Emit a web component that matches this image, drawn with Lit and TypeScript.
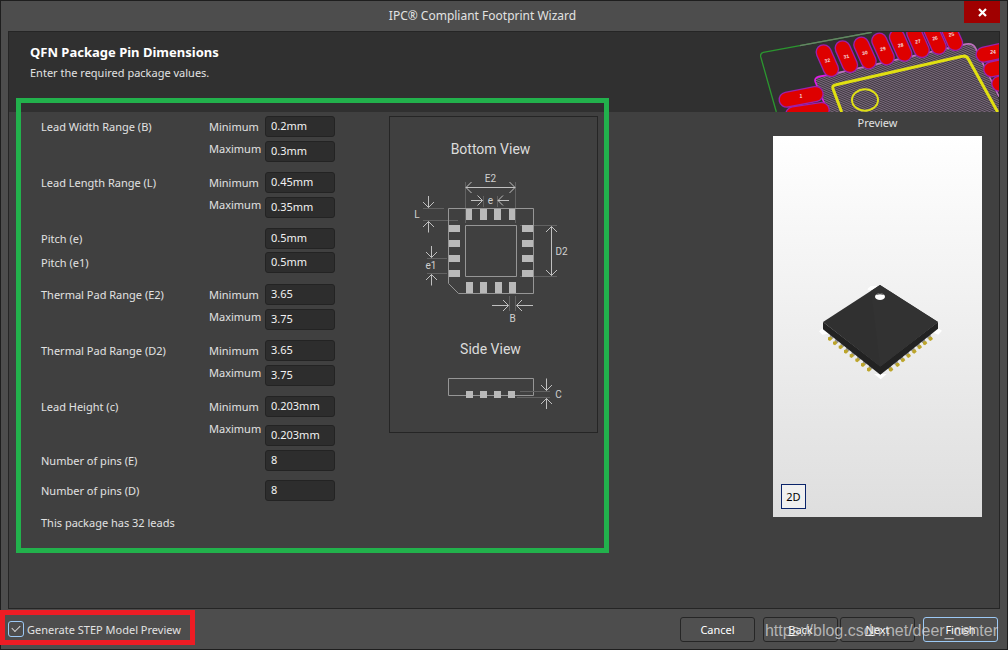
import { LitElement, html, svg, css } from "lit";
import { customElement } from "lit/decorators.js";

const base = css`
  :host { display: block; }
  *, *::before, *::after { box-sizing: border-box; }
  svg { display: block; }
`;

const rangeGroups = [
  { label: "Lead Width Range (B)", min: "0.2mm", max: "0.3mm" },
  { label: "Lead Length Range (L)", min: "0.45mm", max: "0.35mm" },
  { pair: [["Pitch (e)", "0.5mm"], ["Pitch (e1)", "0.5mm"]] },
  { label: "Thermal Pad Range (E2)", min: "3.65", max: "3.75" },
  { label: "Thermal Pad Range (D2)", min: "3.65", max: "3.75" },
  { label: "Lead Height (c)", min: "0.203mm", max: "0.203mm", spaced: true },
];

@customElement("dimension-fields")
class DimensionFields extends LitElement {
  static styles = [base, css`
    .groups { display: flex; flex-direction: column; gap: 10px; }
    .group { display: grid; grid-template-columns: 168px 56px 70px; line-height: 22px; }
    .names { display: flex; flex-direction: column; }
    .inputs { display: flex; flex-direction: column; gap: 4px; }
    .inputs.spaced { gap: 8px; }
    .pair { display: flex; flex-direction: column; gap: 3px; padding-bottom: 1px; }
    .row { display: grid; grid-template-columns: 224px 70px; height: 21px; line-height: 22px; }
    .counts { display: flex; flex-direction: column; gap: 9px; padding-top: 4px; }
    .note { margin: 11px 0 0; line-height: 22px; }
    input {
      width: 100%; height: 21px; padding: 0 5px 2px; color: #f2f2f2; background: #2d2d2d;
      border: 1px solid #232323; border-radius: 3px; font: inherit; line-height: 17px; outline: 0;
    }
  `];
  render() {
    return html`
      <div class="groups">
        ${rangeGroups.map((g: any, i) => g.pair
          ? html`<div class="pair">${g.pair.map(([name, value]: string[], j: number) => html`
              <div class="row"><label for="p${j}">${name}</label><input id="p${j}" .value=${value}></div>`)}</div>`
          : html`<div class="group" role="group" aria-label=${g.label}>
              <span>${g.label}</span>
              <div class="names"><label for="min${i}">Minimum</label><label for="max${i}">Maximum</label></div>
              <div class="inputs ${g.spaced ? "spaced" : ""}">
                <input id="min${i}" .value=${g.min}><input id="max${i}" .value=${g.max}>
              </div>
            </div>`)}
      </div>
      <div class="counts">
        <div class="row"><label for="ne">Number of pins (E)</label><input id="ne" .value=${"8"}></div>
        <div class="row"><label for="nd">Number of pins (D)</label><input id="nd" .value=${"8"}></div>
      </div>
      <p class="note">This package has 32 leads</p>`;
  }
}

@customElement("package-drawing")
class PackageDrawing extends LitElement {
  static styles = [base, css`
    .frame { width: 209px; border: 1px solid #252525; }
    .line { fill: none; stroke: #969696; }
    .guide { fill: none; stroke: #626262; }
    .arrow { fill: none; stroke: #c0c0c0; }
    .pad { fill: #b9b9b9; }
    text { fill: #d0d0d0; font-family: Roboto, sans-serif; font-size: 10px; text-anchor: middle; }
    .heading { fill: #dcdcdc; font-size: 14px; }
  `];
  render() {
    const pad = (x: number, y: number, w: number, h: number) =>
      svg`<rect class="pad" x=${x} y=${y} width=${w} height=${h} />`;
    return html`<div class="frame"><svg width="207" height="315" viewBox="0 0 207 315" role="img" aria-label="Package drawing">
      <text class="heading" x="100.5" y="37">Bottom View</text>
      <path class="guide" d="M75.5 65V106M125.5 65V106M93.5 79V90M107.5 79V90M33 91.5H54M33 103.5H68M37 141.5H57M37 156.5H57M130 108.5H167M130 159.5H167M119.5 179V194M125.5 179V194" />
      <path class="line" d="M58.5 91.5H143.5V176.5H68.5L58.5 166.5ZM75.5 108.5H126.5V159.5H75.5Z" />
      ${[76, 90, 104, 119].map((x, i) => pad(x, 92, i % 3 ? 7 : 6, 11))}
      ${[76, 90, 105, 119].map((x) => pad(x, 165, 7, 11))}
      ${[108, 123, 138, 153].map((y) => [pad(59, y, 11, 7), pad(132, y, 11, 7)])}
      <path class="arrow" d="M76 70.5H125M81.5 65L76 70.5L81.5 76M119.5 65L125 70.5L119.5 76
        M81 83.5H92.5M87.5 78.5L92.5 83.5L87.5 88.5M119 83.5H108M113 78.5L108 83.5L113 88.5
        M38.5 79V90.5M33 85L38.5 90.5L44 85M38.5 115.5V104.5M33 110L38.5 104.5L44 110
        M41.5 129V140.5M36 135L41.5 140.5L47 135M41.5 168.5V157.5M36 163L41.5 157.5L47 163
        M161.5 109.5V158.5M156 115L161.5 109.5L167 115M156 153L161.5 158.5L167 153
        M102 188.5H118.5M113 183L118.5 188.5L113 194M143 188.5H126.5M132 183L126.5 188.5L132 194" />
      <text x="100.5" y="65">E2</text>
      <text x="100.5" y="87">e</text>
      <text x="27" y="101">L</text>
      <text x="41" y="152">e1</text>
      <text x="171.5" y="138">D2</text>
      <text x="122.5" y="205">B</text>
      <text class="heading" x="100.5" y="237">Side View</text>
      <path class="line" d="M58.5 261.5H143.5V278.5H58.5Z" />
      <path class="guide" d="M130 274.5H160M127 280.5H160" />
      ${[76, 90, 104, 118].map((x) => pad(x, 274, 7, 7))}
      <path class="arrow" d="M156.5 261.5V273.5M151 268L156.5 273.5L162 268M156.5 292V281.5M151 287L156.5 281.5L162 287" />
      <text x="168.5" y="281">C</text>
    </svg></div>`;
  }
}

@customElement("footprint-art")
class FootprintArt extends LitElement {
  static styles = [base, css`
    .pill { stroke-linecap: round; stroke: #de0000; stroke-width: 41; }
    .rim { stroke-linecap: round; stroke: #9c20ac; stroke-width: 49; }
    text { fill: #f5dede; font: bold 15px "Liberation Sans", sans-serif; text-anchor: middle; }
  `];
  render() {
    const top: [number, number, string][] = [
      [232, 182, "32"], [289, 170, "31"], [345, 159, "30"], [399, 147, "29"],
      [452, 136, "28"], [504, 125, "27"], [555, 115, "26"], [604, 104, "25"],
    ];
    const pill = (x1: number, y1: number, x2: number, y2: number) => svg`
      <path class="rim" d="M${x1} ${y1}L${x2} ${y2}" /><path class="pill" d="M${x1} ${y1}L${x2} ${y2}" />`;
    return html`<svg width="239" height="80" viewBox="30 96 717 240" aria-hidden="true">
      <defs><pattern id="hatch" width="6" height="6" patternUnits="userSpaceOnUse" patternTransform="rotate(24)">
        <rect width="6" height="6" fill="#3d393e" /><rect width="6" height="3" fill="#7d6a7f" />
      </pattern></defs>
      <path d="M79 336L32 170Q30 160 40 157L365 97" fill="none" stroke="#2b962f" stroke-width="4" />
      <path d="M150 137L365 97" fill="none" stroke="#6a8069" stroke-width="4" />
      <path d="M234 336L198 252Q190 234 206 230L640 134Q668 126 677 145L747 300V336Z" fill="url(#hatch)" />
      <path d="M234 336L196 246Q192 234 206 230L240 224" fill="none" stroke="#e31be8" stroke-width="5" />
      <path d="M240 224L640 134Q668 126 677 145L747 290" fill="none" stroke="#bc70bd" stroke-width="5" />
      ${top.map(([x, y]) => pill(x - 11, y - 25, x + 11, y + 25))}
      ${pill(110, 299, 197, 282)}${pill(130, 343, 215, 330)}
      ${pill(701, 164, 770, 149)}${pill(724, 208, 790, 194)}${pill(748, 251, 810, 238)}
      ${top.map(([x, y, n]) => svg`<text x=${x} y=${y + 5} transform="rotate(-12 ${x} ${y})">${n}</text>`)}
      <text x="153" y="293">1</text><text x="729" y="163">24</text>
      <path d="M275 336L249 266Q246 256 258 254L637 169Q649 166 655 177L743 336" fill="none" stroke="#e1e011" stroke-width="9" />
      <ellipse cx="345" cy="300" rx="39" ry="32" fill="none" stroke="#dfe015" stroke-width="6" />
    </svg>`;
  }
}

@customElement("model-preview")
class ModelPreview extends LitElement {
  static styles = [base, css`
    .caption { text-align: center; line-height: 22px; height: 24px; margin: 0; }
    .stage { position: relative; background: linear-gradient(#ffffff, #dedede); }
    .mode {
      position: absolute; left: 8px; bottom: 8px; width: 25px; height: 25px; padding: 0;
      border: 1px solid #0a246a; background: #f0f0f0; color: #000; font: inherit;
    }
  `];
  render() {
    const left = [[195, 236], [210, 249], [227, 261], [243, 274], [260, 287], [277, 300], [294, 314], [312, 328]];
    const right = [[378, 328], [398, 314], [414, 300], [431, 287], [448, 274], [464, 261], [480, 249], [497, 236]];
    const lead = (dir: number) => ([x, y]: number[]) => svg`
      <ellipse cx=${x + dir * 5} cy=${y - 6} rx="6" ry="7" fill="#969696" />
      <path d="M${x - 6} ${y - 4}L${x + 3} ${y - 6}L${x + 7} ${y + 1}L${x} ${y + 7}L${x - 6} ${y + 4}Z" fill="#bca52b" />`;
    return html`
      <p class="caption">Preview</p>
      <div class="stage">
        <svg width="100%" viewBox="24 -372 627 1143" role="img" aria-label="3D model">
          <path d="M308 86L317 78H335V90H308ZM162 214L175 203L190 221L172 224ZM531 212L517 203L505 218L520 224ZM327 342H365L347 358Z" fill="#fff" />
          ${left.map(lead(1))}${right.map(lead(-1))}
          <path d="M174 186L346 318L519 186V206L346 344L174 208Z" fill="#222" />
          <path d="M345 75L519 186L346 320L174 186Z" fill="#303030" />
          <path d="M318 93L345 75L519 186L346 320Z" fill="#323232" />
          <ellipse cx="345" cy="110" rx="15" ry="10" fill="#fff" />
          <path d="M331 106Q345 94 359 106Q345 100 331 106Z" fill="#171717" />
        </svg>
        <button class="mode">2D</button>
      </div>`;
  }
}

@customElement("app-root")
class AppRoot extends LitElement {
  static styles = [base, css`
    :host { font: 11px "Noto Sans", sans-serif; color: #e2e2e2; }
    .window {
      display: flex; flex-direction: column; min-height: 100vh;
      background: #4d4d4d; border: 1px solid #1e1e1e;
    }
    .titlebar { display: flex; height: 30px; padding-right: 7px; }
    .title { flex: 1; margin: 0; text-align: center; font-size: 12px; font-weight: 400; line-height: 29px; }
    .close {
      width: 36px; height: 22px; padding: 0; border: 0; background: #a00000;
      display: flex; align-items: center; justify-content: center;
    }
    .panel {
      flex: 1; display: flex; flex-direction: column; margin: 0 7px; background: #404040;
      border: 1px solid #252525;
    }
    .header { display: flex; justify-content: space-between; height: 80px; background: #303030; overflow: hidden; }
    .intro { padding: 10px 21px; }
    .heading { margin: 0; color: #fff; font-size: 13px; line-height: 20px; }
    .hint { margin: 0; line-height: 22px; }
    .content { display: flex; justify-content: space-between; padding-right: 17px; }
    .form { position: relative; display: flex; gap: 54px; padding: 4px 17px 19px 32px; }
    .highlight { position: absolute; inset: -14px 6px 0 7px; border: 5px solid #22b14c; pointer-events: none; }
    .preview { width: 209px; }
    .footer { position: relative; display: flex; align-items: center; gap: 8px; height: 40px; padding: 0 9px 0 7px; }
    .option { position: relative; display: flex; align-items: center; gap: 3px; margin-right: auto; }
    .option::after { content: ""; position: absolute; inset: -11px -14px -8px -8px; border: 5px solid #ed1c24; pointer-events: none; }
    .tick {
      appearance: none; width: 16px; height: 16px; margin: 0; border: 1px solid #9cc9f5; border-radius: 3px;
      display: grid; place-items: center;
    }
    .tick:checked::before {
      content: ""; width: 8px; height: 5px; margin-top: -3px;
      border: solid #d8d8d8; border-width: 0 0 1px 1px; transform: rotate(-45deg);
    }
    .steps { display: flex; gap: 2px; }
    .action {
      width: 75px; height: 25px; padding: 0; border: 1px solid #262626; border-radius: 3px;
      background: #505050; color: #fff; font: inherit;
    }
    .action.primary { border-color: #9cc9f5; }
    .watermark {
      position: absolute; right: 9px; top: 12px; font: 16px/20px "Liberation Sans", sans-serif;
      color: rgba(215, 215, 215, 0.75); pointer-events: none; white-space: nowrap;
    }
  `];
  render() {
    return html`<div class="window">
      <div class="titlebar">
        <h1 class="title">IPC® Compliant Footprint Wizard</h1>
        <button class="close" aria-label="Close">
          <svg width="9" height="9" viewBox="0 0 9 9"><path d="M1 1L8 8M8 1L1 8" stroke="#fff" stroke-width="2.2" /></svg>
        </button>
      </div>
      <main class="panel">
        <div class="header">
          <div class="intro">
            <h2 class="heading">QFN Package Pin Dimensions</h2>
            <p class="hint">Enter the required package values.</p>
          </div>
          <footprint-art></footprint-art>
        </div>
        <div class="content">
          <div class="form">
            <dimension-fields></dimension-fields>
            <package-drawing></package-drawing>
            <div class="highlight"></div>
          </div>
          <model-preview class="preview"></model-preview>
        </div>
      </main>
      <div class="footer">
        <label class="option"><input class="tick" type="checkbox" checked>Generate STEP Model Preview</label>
        <button class="action">Cancel</button>
        <div class="steps">
          <button class="action"><u>B</u>ack</button>
          <button class="action"><u>N</u>ext</button>
        </div>
        <button class="action primary">Finish</button>
        <span class="watermark">https://blog.csdn.net/deer_center</span>
      </div>
    </div>`;
  }
}
